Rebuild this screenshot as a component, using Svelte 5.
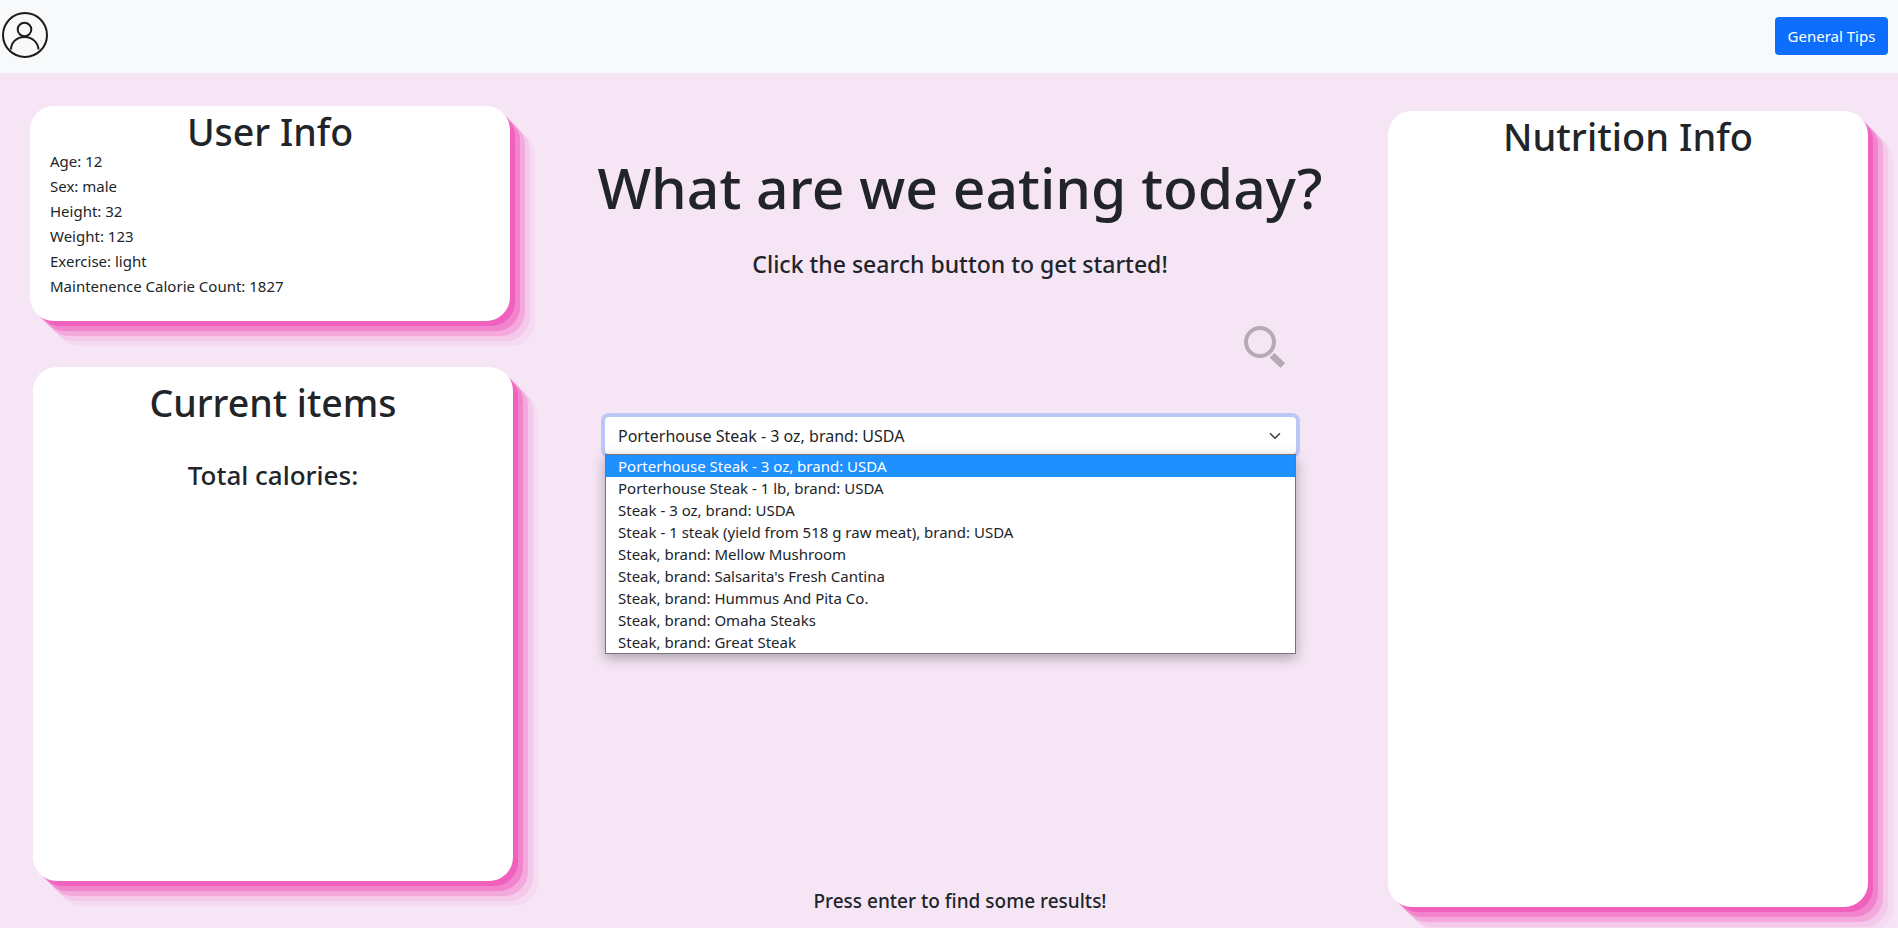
<script>
  const user = ['Age: 12', 'Sex: male', 'Height: 32', 'Weight: 123', 'Exercise: light', 'Maintenence Calorie Count: 1827']
  const foods = [
    'Porterhouse Steak - 3 oz, brand: USDA',
    'Porterhouse Steak - 1 lb, brand: USDA',
    'Steak - 3 oz, brand: USDA',
    'Steak - 1 steak (yield from 518 g raw meat), brand: USDA',
    'Steak, brand: Mellow Mushroom',
    "Steak, brand: Salsarita's Fresh Cantina",
    'Steak, brand: Hummus And Pita Co.',
    'Steak, brand: Omaha Steaks',
    'Steak, brand: Great Steak'
  ]
  let selected = 0
</script>

<nav class="navbar">
  <svg class="avatar" width="50" height="50" viewBox="0 0 50 50" fill="none" stroke="#1b1b1b" stroke-width="2">
    <circle cx="25" cy="25" r="22" />
    <circle cx="24.5" cy="19.5" r="6.8" />
    <path d="M11 39.5c0-7 5.5-12.5 13.5-12.5S38 32.500 38.500 39.500" />
  </svg>
  <button class="tips">General Tips</button>
</nav>

<main class="page">
  <div class="left">
    <section class="card user">
      <h2>User Info</h2>
      {#each user as line}
        <p>{line}</p>
      {/each}
    </section>
    <section class="card items">
      <h2>Current items</h2>
      <h3>Total calories:</h3>
    </section>
  </div>

  <div class="center">
    <h1>What are we eating today?</h1>
    <h5>Click the search button to get started!</h5>
    <div class="search-row">
      <svg width="42" height="44" viewBox="0 0 42 44" fill="none" stroke="#b5abb5">
        <circle cx="16" cy="16" r="14" stroke-width="4" />
        <path d="M30.500 27.500l10 9.500-4 4.500-10.500-10z" fill="#b5abb5" stroke-width="1" stroke-linejoin="round" />
      </svg>
    </div>
    <div class="select-wrap">
      <div class="select">
        <span>{foods[selected]}</span>
        <svg width="12" height="12" viewBox="0 0 16 16" fill="none" stroke="#343a40" stroke-width="2" stroke-linecap="round" stroke-linejoin="round">
          <path d="M2 5l6 6 6-6" />
        </svg>
      </div>
      <ul class="options">
        {#each foods as food, i}
          <li class:active={i === selected}>{food}</li>
        {/each}
      </ul>
    </div>
    <h6>Press enter to find some results!</h6>
  </div>

  <div class="right">
    <section class="card nutrition">
      <h2>Nutrition Info</h2>
    </section>
  </div>
</main>

<style>
  :global(body) {
    background: #f6e5f5;
    font-family: "Noto Sans", "Open Sans", sans-serif;
    color: #212529;
    overflow: hidden;
  }

  .navbar {
    height: 73px;
    background: #f8f9fa;
    display: flex;
    align-items: center;
    justify-content: space-between;
    padding-right: 10px;
  }

  .avatar {
    margin-top: -3px;
  }

  .tips {
    width: 113px;
    height: 38px;
    margin-top: -2px;
    padding: 0;
    background: #0d6efd;
    color: #fff;
    border: 0;
    border-radius: 4px;
    font: 400 15px "Noto Sans", sans-serif;
  }

  .page {
    display: grid;
    grid-template-columns: 605px 710px 583px;
    height: 855px;
  }

  .card {
    width: 480px;
    background: #fff;
    border-radius: 24px;
    box-shadow: rgba(240, 46, 170, 0.4) 5px 5px, rgba(240, 46, 170, 0.3) 10px 10px, rgba(240, 46, 170, 0.2) 15px 15px, rgba(240, 46, 170, 0.1) 20px 20px, rgba(240, 46, 170, 0.05) 25px 25px;
    box-sizing: border-box;
  }

  h1, h2, h3, h5, h6, p {
    margin: 0;
    font-weight: 500;
  }

  h2 {
    font-size: 37.500px;
    line-height: 52px;
    text-align: center;
  }

  .left {
    display: flex;
    flex-direction: column;
  }

  .user {
    height: 215px;
    margin: 33px 0 0 30px;
    padding: 1px 20px 0;
  }

  .user h2 {
    line-height: 50px;
    margin-bottom: -8px;
  }

  .user p {
    font-size: 15px;
    font-weight: 400;
    line-height: 25px;
  }

  .items {
    height: 514px;
    margin: 46px 0 0 33px;
    padding-top: 10px;
  }

  h3 {
    font-size: 26px;
    line-height: 36px;
    text-align: center;
    margin-top: 28px;
  }

  .center {
    display: flex;
    flex-direction: column;
    align-items: center;
    position: relative;
  }

  h1 {
    font-size: 57px;
    line-height: 78px;
    margin-top: 75px;
    white-space: nowrap;
  }

  h5 {
    font-size: 23px;
    line-height: 30px;
    margin-top: 23px;
  }

  .search-row {
    align-self: flex-start;
    margin: 47px 0 0 639px;
    height: 44px;
    line-height: 0;
  }

  .select-wrap {
    width: 691px;
    align-self: flex-start;
    position: relative;
    margin-top: 47px;
  }

  .select {
    height: 37px;
    background: #fff;
    border-radius: 4px;
    box-shadow: 0 0 0 4px rgba(13, 110, 253, 0.25);
    display: flex;
    align-items: center;
    justify-content: space-between;
    padding: 0 15px 0 13px;
    font-size: 16px;
  }

  .options {
    position: absolute;
    left: 0;
    right: 0;
    top: 37px;
    margin: 0;
    padding: 0;
    list-style: none;
    background: #fff;
    border: 1px solid #767676;
    box-shadow: 0 4px 12px rgba(0, 0, 0, 0.3);
    font-size: 15px;
  }

  li {
    height: 22px;
    line-height: 22px;
    padding-left: 12px;
  }

  li.active {
    background: #1e90ff;
    color: #fff;
  }

  h6 {
    font-size: 19px;
    line-height: 26px;
    position: absolute;
    bottom: 14px;
  }

  .nutrition {
    height: 796px;
    margin-top: 38px;
    margin-left: 73px;
  }

  .nutrition h2 {
    font-size: 38px;
    line-height: 50px;
  }
</style>
